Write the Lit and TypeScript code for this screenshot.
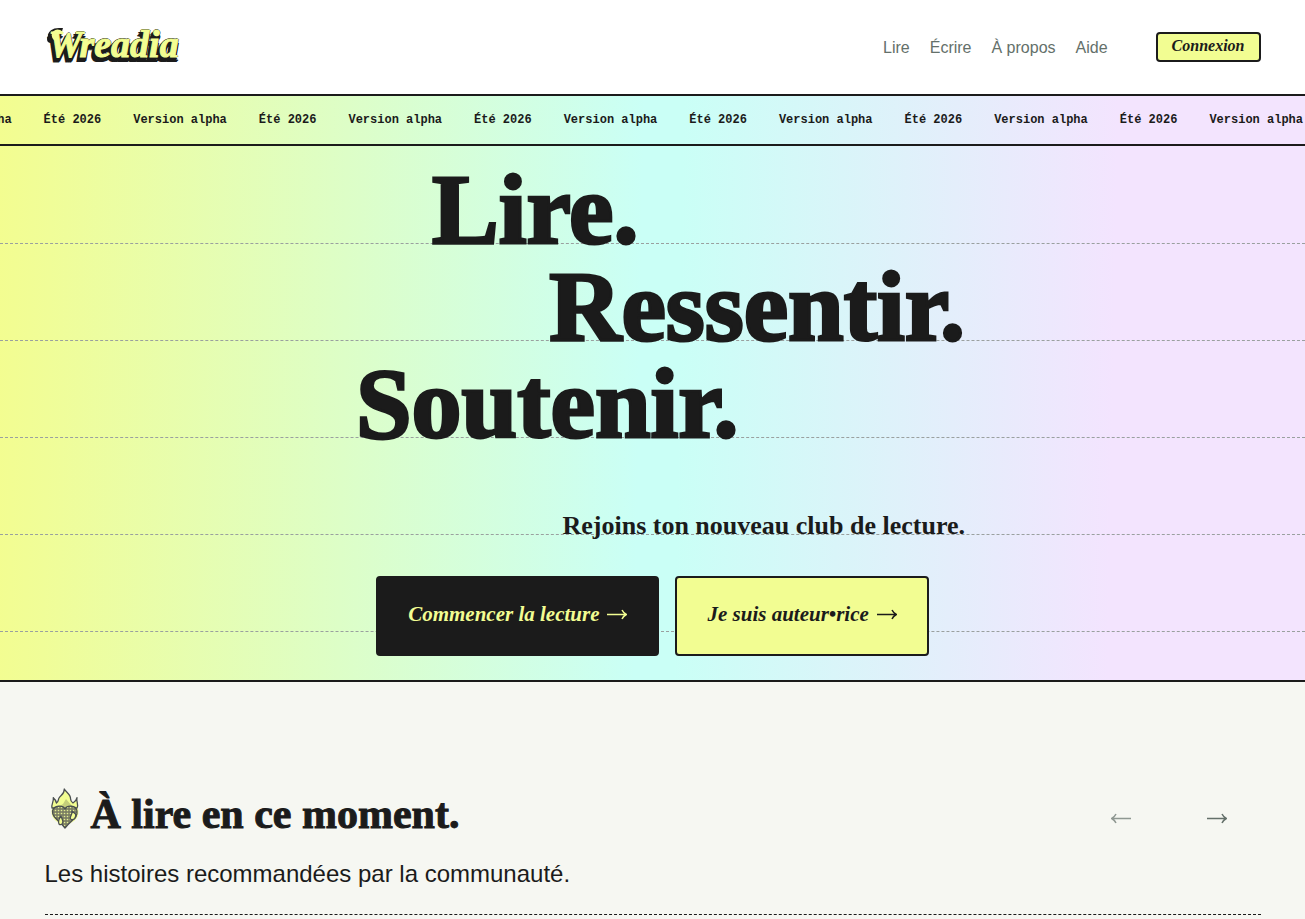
import { LitElement, html, css } from "lit";
import { customElement } from "lit/decorators.js";

const arrowRight = html`<svg class="arrow" viewBox="0 0 20 12" aria-hidden="true">
  <path d="M0 6.5H19M15 2C16 4 17.5 5.5 19.3 6.5C17.5 7.5 16 9 15 11" />
</svg>`;

const arrowLeft = html`<svg class="arrow" viewBox="0 0 20 12" aria-hidden="true">
  <path d="M20 6.5H1M5 2C4 4 2.5 5.5 .7 6.5C2.5 7.5 4 9 5 11" />
</svg>`;

@customElement("wreadia-logo")
export class WreadiaLogo extends LitElement {
  static styles = css`
    :host { display: block; }
    .logo { display: grid; width: 132px; height: 44px; }
    .curl { grid-area: 1 / 1; width: 40px; height: 44px; overflow: visible; }
    .word {
      grid-area: 1 / 1;
      padding-left: 4px;
      font: italic bold 38px/38px "Liberation Serif", serif;
      color: #f2fd92;
      -webkit-text-stroke: 1px #f2fd92;
      text-shadow: 1px 0 #1b1b1b, 0 -1px #1b1b1b, -1px 0 #1b1b1b, -1px 1px #1b1b1b, -1px 2px #1b1b1b,
        -2px 3px #1b1b1b, -3px 4px #1b1b1b, -4px 5px #1b1b1b, -1px 4px #1b1b1b, 1px 4px #1b1b1b, 0 2px #1b1b1b,
        0 5px #1b1b1b, -2px 5px #1b1b1b, -3px 2px #1b1b1b;
    }
  `;

  render() {
    return html`<div class="logo">
      <svg class="curl" viewBox="0 0 40 44" fill="none" stroke-linecap="round" aria-hidden="true">
        <circle cx="6" cy="14" r="4" fill="#1b1b1b" />
        <path stroke="#1b1b1b" stroke-width="6" d="M6 13C5 8 9 6 14 6L12 13" />
      </svg>
      <span class="word">Wreadia</span>
      <svg class="curl" viewBox="0 0 40 44" fill="none" stroke-linecap="round" aria-hidden="true">
        <path stroke="#f2fd92" stroke-width="3" d="M10 14C5 9 11 3 17 8" />
      </svg>
    </div>`;
  }
}

@customElement("flaming-heart")
export class FlamingHeart extends LitElement {
  static styles = css`
    :host { display: block; }
    .heart { display: block; width: 40px; height: 42px; }
  `;

  render() {
    return html`<svg class="heart" viewBox="0 0 40 42" aria-hidden="true">
      <defs>
        <pattern id="dots" width="3" height="3" patternUnits="userSpaceOnUse">
          <rect width="3" height="3" fill="#7d8164" />
          <circle cx="1.5" cy="1.5" r=".8" fill="#e4ee92" />
        </pattern>
      </defs>
      <ellipse cx="20" cy="24" rx="13.5" ry="12" fill="#f2fd92" />
      <g stroke="#4a4f50" stroke-width="1.3" stroke-linejoin="round">
        <path fill="#f2fd92" d="M7 20C6 16 9 14 8.3 9.7C10 11 11 13 11.5 15C13.5 14 13 12 14 10C16 7 19.5 6 19.3 1C21 4 26 7 25.5 10.5C25.5 12 26.5 14 28 15C30 14 31.5 12 32 9.7C31 14 34 16 32 20Z" />
        <path fill="#c5ce7b" stroke="none" d="M13 19L18 16L21 11L27 18L20 22Z" />
        <path fill="url(#dots)" d="M20 21C18 17 9 17 7.5 23C7 30 14 32 20 40C26 32 33 30 32 23C31 17 22 17 20 21Z" />
        <path fill="#f2fd92" d="M27 23C28 27 24 28 25.5 31C28 33 32 30 30.5 26ZM16 28C13 32 13 34 14 36C16 38 19 35 17.5 32Z" />
      </g>
    </svg>`;
  }
}

@customElement("app-root")
export class AppRoot extends LitElement {
  static styles = css`
    :host {
      display: block;
      min-height: 100vh;
      overflow: hidden;
      background: #f6f7f2;
      color: #1b1b1b;
      font-family: "Liberation Sans", Arial, sans-serif;
      --ink: #1b1b1b;
      --lemon: #f2fd92;
      --serif: "Liberation Serif", "Times New Roman", serif;
    }
    * { box-sizing: border-box; }
    a { color: inherit; text-decoration: none; }
    .wrap { width: calc(100% - 88px); max-width: 1216px; margin: 0 auto; }

    .header { background: #fff; border-bottom: 2px solid var(--ink); }
    .bar { display: flex; align-items: center; justify-content: space-between; height: 94px; }
    .menu { display: flex; align-items: center; gap: 48px; }
    .links { display: flex; gap: 20px; padding-top: 2px; font-size: 16px; color: #64706a; }
    .login {
      height: 30px;
      padding: 0 14px 4px;
      border: 2px solid var(--ink);
      border-radius: 4px;
      background: var(--lemon);
      color: var(--ink);
      font: italic bold 16px/24px var(--serif);
    }

    .banner {
      background: linear-gradient(91deg, #f3fd90 0%, #f0fd98 4%, #cafff6 49%, #cafff6 52%, #f3e4fe 85%);
      border-bottom: 2px solid var(--ink);
    }
    .ticker {
      display: flex;
      justify-content: flex-end;
      overflow: hidden;
      padding-right: 2px;
      border-bottom: 2px solid var(--ink);
      font: bold 12px/48px "Liberation Mono", monospace;
      white-space: nowrap;
    }
    .track { display: flex; flex: none; gap: 32px; }

    .hero { position: relative; padding: 15px 0 24px; }
    .rules { position: absolute; inset: 0; padding-top: 97px; overflow: hidden; }
    .rule { height: 97px; border-top: 1px dashed #9aa09f; }
    .pitch { position: relative; max-width: 625px; margin: 0 auto; }
    .title {
      display: flex;
      flex-direction: column;
      margin: 0 0 57px;
      font: bold 100px/97px var(--serif);
      -webkit-text-stroke: 3px var(--ink);
    }
    .first { padding-left: 92px; }
    .second { text-align: right; }
    .third { padding-left: 16px; }
    .lead { margin: 0 0 33px; text-align: right; font: bold 26px/34px var(--serif); }
    .actions { display: flex; justify-content: center; gap: 16px; }
    .cta {
      display: flex;
      align-items: center;
      gap: 8px;
      height: 80px;
      padding: 0 30px 4px;
      border: 2px solid var(--ink);
      border-radius: 4px;
      background: var(--lemon);
      color: var(--ink);
      font: italic bold 21px/24px var(--serif);
      white-space: nowrap;
    }
    .dark { background: var(--ink); color: var(--lemon); }
    .arrow { display: block; flex: none; width: 20px; height: 12px; fill: none; stroke: currentColor; stroke-width: 1.5; }

    .reads { padding-top: 104px; }
    .head { display: flex; align-items: center; justify-content: space-between; height: 64px; }
    .heading { display: flex; align-items: flex-start; gap: 6px; height: 60px; }
    .name { margin: 0; font: bold 42px/52px var(--serif); -webkit-text-stroke: 1px var(--ink); }
    .pager { display: flex; gap: 8px; }
    .page {
      display: grid;
      place-items: center;
      width: 88px;
      height: 48px;
      border: 0;
      padding: 0;
      background: none;
      color: #64706a;
    }
    .page:disabled { opacity: 0.7; }
    .intro { margin: 8px 0 0; padding-bottom: 24px; border-bottom: 1px dashed var(--ink); font-size: 24px; line-height: 32px; }
  `;

  render() {
    return html`
      <header class="header">
        <div class="wrap bar">
          <a href="#"><wreadia-logo></wreadia-logo></a>
          <div class="menu">
            <nav class="links">
              ${["Lire", "Écrire", "À propos", "Aide"].map((label) => html`<a href="#">${label}</a>`)}
            </nav>
            <button class="login">Connexion</button>
          </div>
        </div>
      </header>
      <main>
        <div class="banner">
          <div class="ticker">
            <div class="track">
              <span>Version alpha</span>
              ${Array.from({ length: 6 }, () => html`<span>Été 2026</span><span>Version alpha</span>`)}
            </div>
          </div>
          <section class="hero">
            <div class="rules" aria-hidden="true">
              ${Array.from({ length: 5 }, () => html`<div class="rule"></div>`)}
            </div>
            <div class="pitch">
              <h1 class="title">
                <span class="first">Lire.</span>
                <span class="second">Ressentir.</span>
                <span class="third">Soutenir.</span>
              </h1>
              <p class="lead">Rejoins ton nouveau club de lecture.</p>
              <div class="actions">
                <button class="cta dark">Commencer la lecture ${arrowRight}</button>
                <button class="cta">Je suis auteur•rice ${arrowRight}</button>
              </div>
            </div>
          </section>
        </div>
        <section class="wrap reads">
          <div class="head">
            <div class="heading">
              <flaming-heart></flaming-heart>
              <h2 class="name">À lire en ce moment.</h2>
            </div>
            <div class="pager">
              <button class="page" aria-label="Précédent" disabled>${arrowLeft}</button>
              <button class="page" aria-label="Suivant">${arrowRight}</button>
            </div>
          </div>
          <p class="intro">Les histoires recommandées par la communauté.</p>
        </section>
      </main>
    `;
  }
}
